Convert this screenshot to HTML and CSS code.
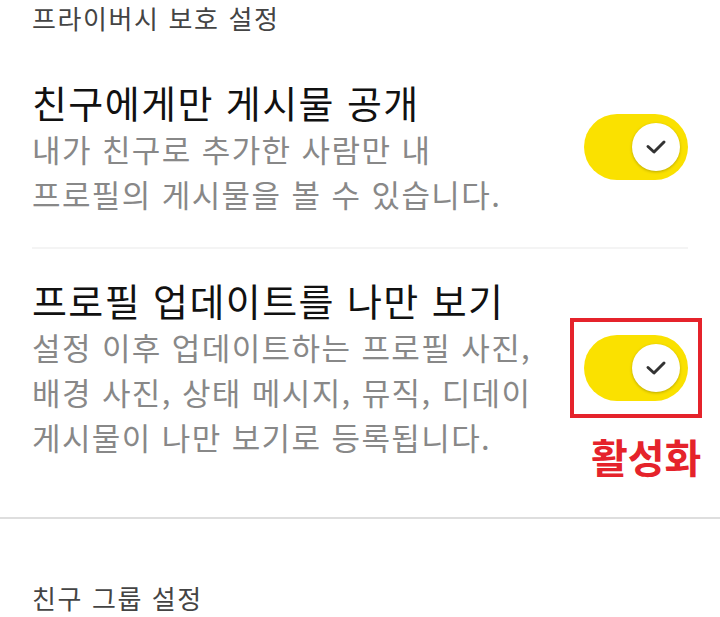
FILE: index.html
```html
<!DOCTYPE html>
<html lang="ko">
<head>
    <meta charset="UTF-8">
    <meta name="viewport" content="width=device-width, initial-scale=1.0">
    <title>프라이버시 보호 설정</title>
    <link rel="stylesheet" href="styles.css">
</head>
<body>
    <h2 class="group-title">프라이버시 보호 설정</h2>

    <div class="setting">
        <div class="setting-text">
            <div class="setting-name">친구에게만 게시물 공개</div>
            <div class="setting-desc">내가 친구로 추가한 사람만 내<br>프로필의 게시물을 볼 수 있습니다.</div>
        </div>
        <div class="toggle on">
            <div class="knob">
                <svg width="22" height="16" viewBox="0 0 22 16">
                    <path d="M3 7.5 L9 13 L19 3" fill="none" stroke="#333" stroke-width="3" stroke-linecap="round" stroke-linejoin="round"/>
                </svg>
            </div>
        </div>
    </div>

    <div class="divider"></div>

    <div class="setting second">
        <div class="setting-text">
            <div class="setting-name">프로필 업데이트를 나만 보기</div>
            <div class="setting-desc">설정 이후 업데이트하는 프로필 사진,<br>배경 사진, 상태 메시지, 뮤직, 디데이<br>게시물이 나만 보기로 등록됩니다.</div>
        </div>
        <div class="highlight">
            <div class="toggle on">
                <div class="knob">
                    <svg width="22" height="16" viewBox="0 0 22 16">
                        <path d="M3 7.5 L9 13 L19 3" fill="none" stroke="#333" stroke-width="3" stroke-linecap="round" stroke-linejoin="round"/>
                    </svg>
                </div>
            </div>
            <span class="highlight-label">활성화</span>
        </div>
    </div>

    <div class="divider full"></div>

    <h2 class="group-title bottom">친구 그룹 설정</h2>
</body>
</html>
```

FILE: styles.css
```css
body {
    margin: 0;
    font-family: "Noto Sans CJK KR", "Noto Sans", sans-serif;
    background: #fff;
    color: #111;
}

.group-title {
    margin: 0;
    padding: 1px 32px 0;
    font-size: 26px;
    line-height: 34px;
    font-weight: 400;
    letter-spacing: 1.6px;
    color: #444;
}

.group-title.bottom {
    padding-top: 65px;
    line-height: 28px;
}

.setting {
    display: flex;
    align-items: center;
    justify-content: space-between;
    padding: 43px 32px 31px;
}

.setting.second {
    padding-top: 27px;
    padding-bottom: 58px;
}

.setting-name {
    font-size: 38px;
    line-height: 48px;
    letter-spacing: 1.4px;
    color: #111;
}

.setting-desc {
    font-size: 31px;
    line-height: 45px;
    letter-spacing: 1.4px;
    color: #888;
}

.toggle {
    width: 104px;
    height: 66px;
    border-radius: 33px;
    background: #fae100;
    display: flex;
    align-items: center;
    justify-content: flex-end;
    padding: 0 8px;
    box-sizing: border-box;
    flex-shrink: 0;
}

.knob {
    width: 48px;
    height: 48px;
    border-radius: 50%;
    background: #fff;
    box-shadow: 0 1px 3px rgba(0, 0, 0, 0.25);
    display: flex;
    align-items: center;
    justify-content: center;
}

.highlight {
    position: relative;
    border: 4px solid #e5232b;
    padding: 13px 10px;
    margin-right: -14px;
}

.highlight-label {
    position: absolute;
    left: 17px;
    top: 110px;
    font-size: 40px;
    line-height: 48px;
    font-weight: 700;
    color: #e5232b;
    white-space: nowrap;
}

.divider {
    height: 2px;
    margin: 0 32px;
    background: #f4f4f4;
}

.divider.full {
    margin: 0;
    background: #dedede;
}
```
